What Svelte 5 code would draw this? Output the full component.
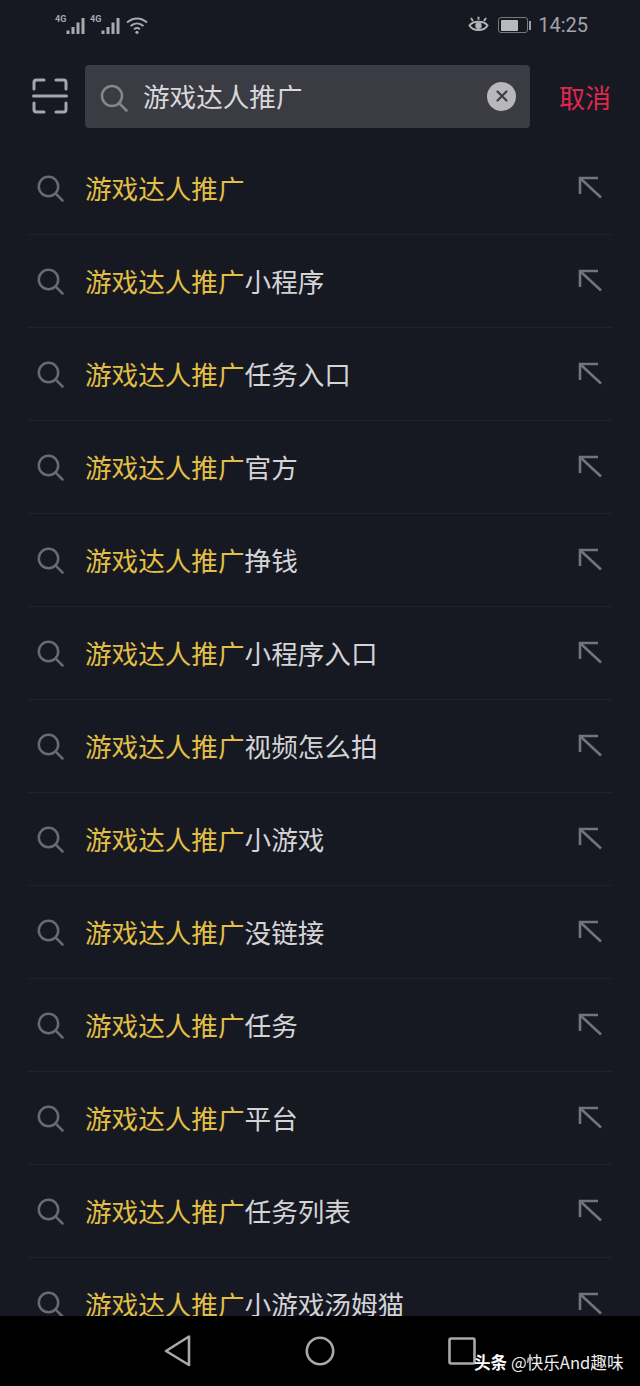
<script lang="ts">
  const keyword = '游戏达人推广';
  const suffixes = ['', '小程序', '任务入口', '官方', '挣钱', '小程序入口', '视频怎么拍', '小游戏', '没链接', '任务', '平台', '任务列表', '小游戏汤姆猫'];
</script>

<div class="screen">
  <div class="status">
    <div class="status-left">
      {#each [0, 1] as sim}
        <div class="sim">
          <span class="net">4G</span>
          <svg width="20" height="18" viewBox="0 0 20 18">
            <rect x="0.5" y="13.5" width="3" height="3.5" fill="#a9a9ae" />
            <rect x="5.5" y="10" width="3" height="7" fill="#a9a9ae" />
            <rect x="10.5" y="5.5" width="3" height="11.5" fill="#a9a9ae" />
            <rect x="15.5" y="1" width="3" height="16" fill="#a9a9ae" />
          </svg>
        </div>
      {/each}
      <svg class="wifi" width="23" height="19" viewBox="0 0 23 19" fill="none" stroke="#a9a9ae" stroke-width="2">
        <path d="M1 6.5C7 1 15 1 21 6.5" />
        <path d="M4.5 10C8.5 6.5 13.5 6.5 17.5 10" />
        <path d="M8 13.2C10 11.6 12 11.6 14 13.2" />
        <circle cx="11" cy="16.3" r="1.6" fill="#a9a9ae" stroke="none" />
      </svg>
    </div>
    <div class="status-right">
      <svg width="21" height="18" viewBox="0 0 21 18" fill="none" stroke="#b4b4b8" stroke-width="1.9">
        <path d="M1.5 9.5C5 4.5 16 4.5 19.5 9.5C16 15.5 5 15.5 1.5 9.5Z" />
        <circle cx="10.5" cy="9.7" r="3.2" fill="#b4b4b8" stroke="none" />
        <path d="M3 2L5 5M10.5 .8V3.8M18 2L16 5" />
      </svg>
      <div class="battery"><div class="level"></div></div>
      <div class="cap"></div>
      <span class="time">14:25</span>
    </div>
  </div>

  <div class="searchbar">
    <svg class="scan" width="36" height="36" viewBox="0 0 36 36" fill="none" stroke="#a6a6ac" stroke-width="3" stroke-linecap="round">
      <path d="M2 11V4.5Q2 2 4.5 2H12M24 2H31.5Q34 2 34 4.5V11" />
      <path d="M2 25V31.5Q2 34 4.5 34H12M24 34H31.5Q34 34 34 31.5V25" />
      <path d="M1.5 18H34.5" />
    </svg>
    <div class="input">
      <svg width="28" height="28" viewBox="0 0 28 28" fill="none" stroke="#85858b" stroke-width="2.6">
        <circle cx="12" cy="12" r="10" />
        <path d="M19.5 19.5L26.5 26.5" stroke-linecap="round" />
      </svg>
      <span class="query">{keyword}</span>
      <div class="clear">
        <svg width="14" height="14" viewBox="0 0 14 14" stroke="#3d3d45" stroke-width="2.2" stroke-linecap="round">
          <path d="M2.5 2.5L11.5 11.5M11.5 2.5L2.5 11.5" />
        </svg>
      </div>
    </div>
    <span class="cancel">取消</span>
  </div>

  <div class="list">
    {#each suffixes as suffix}
      <div class="row">
        <svg class="find" width="27" height="27" viewBox="0 0 27 27" fill="none" stroke="#6a6a71" stroke-width="2.5">
          <circle cx="11.5" cy="11.5" r="9.7" />
          <path d="M18.7 18.7L25.5 25.5" stroke-linecap="round" />
        </svg>
        <span class="label"><span class="hit">{keyword}</span>{suffix}</span>
        <svg class="arrow" width="25" height="23" viewBox="0 0 25 23" fill="none" stroke="#73737a" stroke-width="2.6">
          <path d="M2 18V2H20" />
          <path d="M2.5 2.5L23 21.5" />
        </svg>
      </div>
    {/each}
  </div>

  <div class="nav">
    <svg width="30" height="34" viewBox="0 0 30 34" fill="none" stroke="#a9a9ad" stroke-width="2.6" stroke-linejoin="round">
      <path d="M26 2.5V31L3 17Z" />
    </svg>
    <svg width="30" height="30" viewBox="0 0 30 30" fill="none" stroke="#a9a9ad" stroke-width="2.6">
      <circle cx="15" cy="15" r="13.2" />
    </svg>
    <svg width="28" height="28" viewBox="0 0 28 28" fill="none" stroke="#a9a9ad" stroke-width="2.6">
      <rect x="1.5" y="1.5" width="25" height="25" rx="1.5" />
    </svg>
  </div>

  <div class="watermark"><b>头条</b> @快乐And趣味</div>
</div>

<style>
  :global(body) {
    margin: 0;
    background: #000;
  }

  .screen {
    position: relative;
    width: 640px;
    height: 1386px;
    display: flex;
    flex-direction: column;
    overflow: hidden;
    background: #161922;
    font-family: "Noto Sans CJK SC", "Noto Sans", sans-serif;
  }

  .status {
    height: 50px;
    flex: none;
    display: flex;
    justify-content: space-between;
    align-items: center;
    padding: 0 52px 0 55px;
  }

  .status-left {
    display: flex;
    align-items: flex-end;
    gap: 5px;
    margin-top: 1px;
  }

  .sim {
    display: flex;
    align-items: flex-end;
    position: relative;
    width: 31px;
    justify-content: flex-end;
  }

  .sim + .sim {
    margin-left: -1px;
  }

  .net {
    position: absolute;
    left: 0;
    top: -3px;
    font-size: 9px;
    font-weight: 700;
    line-height: 10px;
    color: #a9a9ae;
    font-family: "Roboto", sans-serif;
  }

  .status-right {
    display: flex;
    align-items: center;
  }

  .battery {
    width: 30px;
    height: 16px;
    margin-left: 9px;
    border: 1.5px solid #77777c;
    border-radius: 3px;
    padding: 1.5px;
    box-sizing: border-box;
  }

  .level {
    width: 17px;
    height: 100%;
    background: #b9b9bd;
    border-radius: 1px;
  }

  .cap {
    width: 2px;
    height: 9px;
    margin-left: 1px;
    background: #a0a0a4;
  }

  .time {
    margin-left: 7px;
    font-family: "Roboto", sans-serif;
    font-size: 20px;
    color: #a3a3a8;
  }

  .searchbar {
    height: 77px;
    flex: none;
    display: flex;
    align-items: flex-start;
    padding: 15px 30px 0 32px;
  }

  .scan {
    margin-top: 13px;
    flex: none;
  }

  .input {
    margin-left: 17px;
    flex: none;
    width: 445px;
    height: 63px;
    display: flex;
    align-items: center;
    box-sizing: border-box;
    padding: 0 14px 0 15px;
    background: #3b3b44;
    border-radius: 4px;
  }

  .input svg {
    margin-top: 3px;
    flex: none;
  }

  .query {
    margin-left: 15px;
    flex: 1;
    font-size: 26.6px;
    color: #d8d8da;
    line-height: 1;
    margin-top: -1px;
  }

  .clear {
    width: 29px;
    height: 29px;
    border-radius: 50%;
    background: #b8b8bc;
    display: flex;
    align-items: center;
    justify-content: center;
    margin-top: -1px;
  }

  .clear svg {
    margin: 0;
  }

  .cancel {
    margin-left: 29px;
    margin-top: 14px;
    font-size: 26px;
    line-height: 36px;
    color: #e0284f;
    white-space: nowrap;
  }

  .list {
    flex: 1;
    min-height: 0;
    overflow: hidden;
    padding: 0 28px;
  }

  .row {
    height: 92px;
    display: flex;
    align-items: center;
    border-bottom: 1px solid #20232c;
  }

  .find {
    margin-left: 9px;
    flex: none;
  }

  .label {
    margin-left: 21px;
    flex: 1;
    font-size: 26.6px;
    line-height: 1;
    color: #d4d4d7;
    white-space: nowrap;
  }

  .hit {
    color: #e2bf45;
  }

  .arrow {
    margin-right: 9px;
    margin-top: -2px;
    flex: none;
  }

  .nav {
    height: 70px;
    flex: none;
    background: #000;
    display: flex;
    align-items: center;
    justify-content: space-between;
    padding: 0 164px 0 163px;
  }

  .nav svg:nth-child(2) {
    margin-left: -2px;
  }

  .watermark {
    position: absolute;
    left: 474px;
    top: 1351px;
    font-size: 16.6px;
    line-height: 22px;
    color: #eee;
    white-space: nowrap;
  }

  .watermark b {
    font-weight: 700;
    color: #fff;
  }
</style>
